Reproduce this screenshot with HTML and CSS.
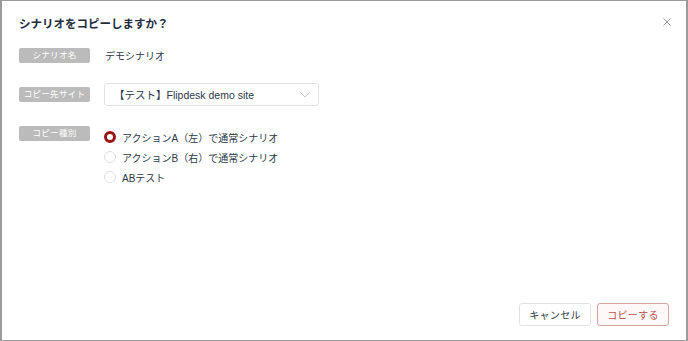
FILE: index.html
```html
<!DOCTYPE html>
<html lang="ja">
  <head>
    <meta charset="UTF-8" />
    <title>シナリオをコピーしますか？</title>
    <link rel="stylesheet" href="styles.css">
  </head>
  <body>
    <div class="dialog">
      <div class="dialog-header">
        <h2 class="dialog-title">シナリオをコピーしますか？</h2>
        <span class="close-btn">
          <svg width="8" height="8" viewBox="0 0 8 8"><path d="M0.5 0.5 L7.5 7.5 M7.5 0.5 L0.5 7.5" stroke="#9a9a9a" stroke-width="1" fill="none"/></svg>
        </span>
      </div>

      <div class="form-row row-name">
        <span class="badge">シナリオ名</span>
        <span class="value">デモシナリオ</span>
      </div>

      <div class="form-row row-site">
        <span class="badge">コピー先サイト</span>
        <div class="select">
          <span>【テスト】Flipdesk demo site</span>
          <svg class="chevron" width="10" height="6" viewBox="0 0 10 6"><path d="M0.5 0.5 L5 5.2 L9.5 0.5" stroke="#c4c8cc" stroke-width="1" fill="none"/></svg>
        </div>
      </div>

      <div class="form-row row-type">
        <span class="badge">コピー種別</span>
        <div class="radios">
          <label class="radio checked"><span class="dot"></span>アクションA（左）で通常シナリオ</label>
          <label class="radio"><span class="dot"></span>アクションB（右）で通常シナリオ</label>
          <label class="radio"><span class="dot"></span>ABテスト</label>
        </div>
      </div>

      <div class="spacer"></div>

      <div class="dialog-footer">
        <button class="btn btn-cancel">キャンセル</button>
        <button class="btn btn-copy">コピーする</button>
      </div>
    </div>
  </body>
</html>
```

FILE: styles.css
```css
html, body {
  margin: 0;
  height: 100%;
}

body {
  font-family: "Liberation Sans", "Noto Sans CJK JP", sans-serif;
  color: #2b3848;
  background-color: #9a9a9a;
}

.dialog {
  box-sizing: border-box;
  height: 339px;
  margin: 1px 2px 0 2px;
  background-color: #ffffff;
  display: flex;
  flex-direction: column;
  padding: 0 17px 14px 17px;
}

.dialog-header {
  display: flex;
  justify-content: space-between;
  align-items: center;
  height: 43px;
}

.dialog-title {
  margin: 0;
  font-size: 11.5px;
  font-weight: bold;
  color: #1f2d3d;
}

.close-btn {
  display: flex;
  margin-right: -2px;
  margin-top: -2px;
}

.form-row {
  display: flex;
  align-items: center;
}

.row-name {
  height: 23px;
}

.row-site {
  margin-top: 16px;
  height: 23px;
}

.row-type {
  margin-top: 20px;
  align-items: flex-start;
}

.badge {
  box-sizing: border-box;
  width: 71px;
  height: 15px;
  line-height: 15px;
  background-color: #bbbbbb;
  color: #ffffff;
  font-size: 8.5px;
  text-align: center;
  border-radius: 2px;
  letter-spacing: 0.3px;
}

.value {
  margin-left: 15px;
  font-size: 10px;
}

.select {
  box-sizing: border-box;
  margin-left: 14px;
  width: 215px;
  height: 23px;
  border: 1px solid #dfe3e8;
  border-radius: 3px;
  display: flex;
  align-items: center;
  justify-content: space-between;
  padding: 0 8px 0 9px;
  font-size: 10.5px;
}

.chevron {
  margin-top: 1px;
}

.radios {
  display: flex;
  flex-direction: column;
  margin-left: 14px;
  margin-top: 1px;
}

.radio {
  display: flex;
  align-items: center;
  height: 20px;
  font-size: 10px;
}

.dot {
  box-sizing: border-box;
  width: 12px;
  height: 12px;
  border-radius: 50%;
  border: 1px solid #dcdfe6;
  margin-right: 6px;
}

.checked .dot {
  border: 3.5px solid #9b1414;
  background-color: #ffffff;
}

.spacer {
  flex: 1;
}

.dialog-footer {
  display: flex;
  justify-content: flex-end;
  gap: 6px;
}

.btn {
  font-family: "Liberation Sans", "Noto Sans CJK JP", sans-serif;
  font-size: 10px;
  height: 23px;
  width: 72px;
  border-radius: 3px;
  background-color: #ffffff;
  cursor: pointer;
  padding: 0;
  letter-spacing: 0.3px;
}

.btn-cancel {
  border: 1px solid #dfe3e8;
  color: #2b3848;
}

.btn-copy {
  border: 1px solid #d4a79c;
  background-color: #fff8f8;
  color: #c0524a;
}
```
